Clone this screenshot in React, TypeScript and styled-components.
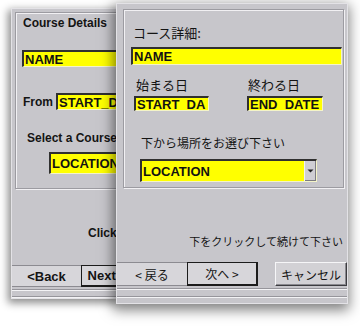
import React from 'react';
import styled, { createGlobalStyle } from 'styled-components';

const GlobalStyle = createGlobalStyle`
  html, body {
    margin: 0;
    padding: 0;
    background: #ffffff;
  }
  body {
    font-family: "Liberation Sans", Arial, sans-serif;
  }
`;

const JP = `"Noto Sans CJK JP", "Liberation Sans", sans-serif`;
const EN = `"Liberation Sans", Arial, sans-serif`;

const Desktop = styled.div`
  position: relative;
  width: 360px;
  height: 326px;
  overflow: hidden;
  background: #ffffff;
`;

// dialog windows sit on a free canvas, so they are placed absolutely
const Window = styled.div<{ $x: number; $y: number; $w: number; $h: number; $shadow: string }>`
  position: absolute;
  left: ${p => p.$x}px;
  top: ${p => p.$y}px;
  width: ${p => p.$w}px;
  height: ${p => p.$h}px;
  box-sizing: border-box;
  display: flex;
  flex-direction: column;
  overflow: hidden;
  background: #c7c6cb;
  border: 1px solid #e3e2e6;
  box-shadow: ${p => p.$shadow};
  color: #141414;
`;

const GroupBox = styled.div<{ $m: string; $pad: string; $w?: number }>`
  margin: ${p => p.$m};
  padding: ${p => p.$pad};
  ${p => (p.$w ? `width: ${p.$w}px; flex-shrink: 0;` : '')}
  display: flex;
  flex-direction: column;
  align-items: flex-start;
  border: 1px solid #9c9ba1;
  box-shadow: 1px 1px 0 #f1f0f3, inset 1px 1px 0 #f1f0f3;
`;

const Label = styled.div<{ $jp?: boolean; $size: number; $mt?: number; $ml?: number }>`
  font-family: ${p => (p.$jp ? JP : EN)};
  font-weight: ${p => (p.$jp ? 400 : 700)};
  font-size: ${p => p.$size}px;
  line-height: ${p => (p.$jp ? 16 : 14)}px;
  margin-top: ${p => p.$mt ?? 0}px;
  margin-left: ${p => p.$ml ?? 0}px;
  white-space: nowrap;
  max-width: 100%;
  overflow: hidden;
`;

const Field = styled.div<{ $w?: number; $h: number; $mt?: number; $ml?: number }>`
  box-sizing: border-box;
  width: ${p => (p.$w ? `${p.$w}px` : 'auto')};
  align-self: ${p => (p.$w ? 'flex-start' : 'stretch')};
  flex-shrink: 0;
  height: ${p => p.$h}px;
  margin-top: ${p => p.$mt ?? 0}px;
  margin-left: ${p => p.$ml ?? 0}px;
  padding-left: 1px;
  display: flex;
  align-items: center;
  background: #ffff00;
  border-top: 2px solid #303030;
  border-left: 2px solid #303030;
  border-right: 1px solid #f4f4c8;
  border-bottom: 1px solid #f4f4c8;
  font-family: ${EN};
  font-weight: 700;
  font-size: 13px;
  color: #121212;
  white-space: nowrap;
  overflow: hidden;
`;

const DateGrid = styled.div`
  display: grid;
  grid-template-columns: 113px 113px;
  margin-top: 12px;
  margin-left: 3px;
`;

const DateColumn = styled.div`
  display: flex;
  flex-direction: column;
  align-items: flex-start;
`;

const InlineRow = styled.div<{ $mt: number }>`
  display: flex;
  align-items: center;
  gap: 2px;
  margin-top: ${p => p.$mt}px;
`;

const SelectBox = styled(Field)`
  padding-right: 0;
  justify-content: space-between;
  align-items: stretch;
`;

const SelectText = styled.span`
  display: flex;
  align-items: center;
`;

const DropArrow = styled.span`
  width: 11px;
  display: flex;
  align-items: center;
  justify-content: center;
  background: #cfced3;
  border-left: 1px solid #f2f2f4;
  box-shadow: inset -1px -1px 0 #7d7c82;
`;

const Hint = styled.div<{ $jp?: boolean; $mt: number; $align: string; $pad: string }>`
  font-family: ${p => (p.$jp ? JP : EN)};
  font-weight: ${p => (p.$jp ? 400 : 700)};
  font-size: ${p => (p.$jp ? 11 : 12)}px;
  line-height: 14px;
  margin-top: ${p => p.$mt}px;
  padding: ${p => p.$pad};
  text-align: ${p => p.$align};
  white-space: nowrap;
  overflow: hidden;
`;

const ButtonBar = styled.div<{ $mt: number; $h: number }>`
  display: flex;
  flex-shrink: 0;
  height: ${p => p.$h}px;
  margin-top: ${p => p.$mt}px;
`;

const Button = styled.div<{ $w: number; $kind: 'flat' | 'default' | 'raised'; $jp?: boolean }>`
  box-sizing: border-box;
  width: ${p => p.$w}px;
  flex-shrink: 0;
  display: flex;
  align-items: center;
  justify-content: center;
  font-family: ${p => (p.$jp ? JP : EN)};
  font-weight: ${p => (p.$jp ? 400 : 700)};
  font-size: ${p => (p.$jp ? 12 : 13)}px;
  background: #d7d6da;
  white-space: nowrap;
  overflow: hidden;
  ${p =>
    p.$kind === 'flat' &&
    `
    border-top: 1px solid #8c8b91;
    border-bottom: 1px solid #8c8b91;
  `}
  ${p =>
    p.$kind === 'default' &&
    `
    border: 1px solid #1c1c1c;
    border-right-width: 2px;
    border-bottom-width: 2px;
  `}
  ${p =>
    p.$kind === 'raised' &&
    `
    margin-left: auto;
    background: #d2d1d5;
    border-top: 1px solid #f6f6f8;
    border-left: 1px solid #f6f6f8;
    border-right: 1px solid #3c3c40;
    border-bottom: 1px solid #3c3c40;
    box-shadow: inset -1px -1px 0 #8a898f;
  `}
`;

const Footer = styled.div`
  flex: 1;
  display: flex;
  flex-direction: column;
`;

const Rule = styled.div<{ $mt: number }>`
  margin-top: ${p => p.$mt}px;
  border-top: 1px solid #96959b;
  border-bottom: 1px solid #f3f3f5;
`;

const Arrow = () => (
  <svg width="7" height="4" viewBox="0 0 7 4">
    <path d="M0.5 0.5h6L3.5 3.5z" fill="#222" />
  </svg>
);

const BackDialog: React.FC = () => (
  <Window $x={11} $y={8} $w={108} $h={291} $shadow="-2px 3px 8px 1px rgba(0,0,0,0.45)">
    <GroupBox $m="3px 0 0 3px" $pad="3px 0 14px 7px" $w={200}>
      <Label $size={12}>Course Details</Label>
      <Field $w={190} $h={17} $mt={20} $ml={-1}>NAME</Field>
      <InlineRow $mt={26}>
        <Label $size={12} style={{ width: 31 }}>From</Label>
        <Field $w={110} $h={17}>START_DATE</Field>
      </InlineRow>
      <Label $size={12} $mt={21} $ml={4}>Select a Course Location</Label>
      <Field $w={160} $h={22} $mt={7} $ml={26}>LOCATION</Field>
    </GroupBox>
    <Hint $mt={37} $align="left" $pad="0 0 0 76px">Click below to continue</Hint>
    <ButtonBar $mt={25} $h={22}>
      <Button $w={69} $kind="flat">&lt;Back</Button>
      <Button $w={50} $kind="default">Next&gt;</Button>
    </ButtonBar>
    <Footer>
      <Rule $mt={2} />
      <Rule $mt={5} />
    </Footer>
  </Window>
);

const FrontDialog: React.FC = () => (
  <Window $x={116} $y={3} $w={232} $h={301} $shadow="-1px 4px 12px 2px rgba(0,0,0,0.5)">
    <GroupBox $m="5px 3px 0 6px" $pad="15px 1px 5px 7px">
      <Label $jp $size={13} $ml={2}>コース詳細:</Label>
      <Field $h={18} $mt={6}>NAME</Field>
      <DateGrid>
        <DateColumn>
          <Label $jp $size={13} $ml={2}>始まる日</Label>
          <Field $w={75} $h={15} $mt={3}>START_DA</Field>
        </DateColumn>
        <DateColumn>
          <Label $jp $size={13} $ml={1}>終わる日</Label>
          <Field $w={76} $h={15} $mt={3}>END_DATE</Field>
        </DateColumn>
      </DateGrid>
      <Label $jp $size={12} $mt={24} $ml={10}>下から場所をお選び下さい</Label>
      <SelectBox $w={177} $h={23} $mt={8} $ml={9}>
        <SelectText>LOCATION</SelectText>
        <DropArrow>
          <Arrow />
        </DropArrow>
      </SelectBox>
    </GroupBox>
    <Hint $jp $mt={46} $align="right" $pad="0 4px 0 0">下をクリックして続けて下さい</Hint>
    <ButtonBar $mt={14} $h={24}>
      <Button $w={70} $kind="flat" $jp>&lt; 戻る</Button>
      <Button $w={71} $kind="default" $jp>次へ &gt;</Button>
      <Button $w={72} $kind="raised" $jp>キャンセル</Button>
    </ButtonBar>
    <Footer>
      <Rule $mt={2} />
      <Rule $mt={6} />
    </Footer>
  </Window>
);

export default function App() {
  return (
    <>
      <GlobalStyle />
      <Desktop>
        <BackDialog />
        <FrontDialog />
      </Desktop>
    </>
  );
}
